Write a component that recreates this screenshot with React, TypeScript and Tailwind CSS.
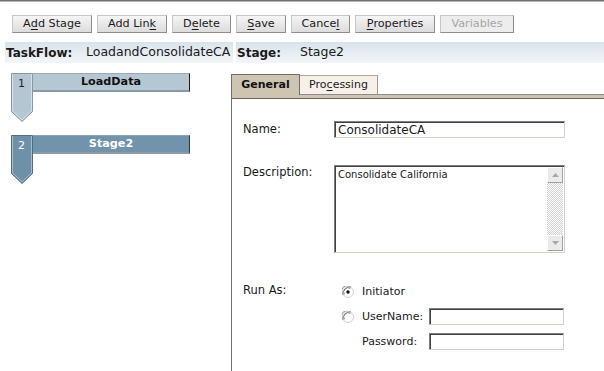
import React from "react";

function Btn({ w, children, disabled }: { w: string; children: React.ReactNode; disabled?: boolean }) {
  return (
    <div
      className={`${w} h-[18px] flex items-center justify-center border border-[#c6c6c6] border-r-[#8e8e8e] border-b-[#8e8e8e] text-[11.2px] leading-none ${
        disabled ? "bg-[#ededed] text-[#a6a6a6]" : "bg-gradient-to-b from-[#f5f5f5] to-[#dcdcdc] text-[#1a1a1a]"
      }`}
    >
      {children}
    </div>
  );
}

function U({ children }: { children: React.ReactNode }) {
  return <span className="underline underline-offset-[2px]">{children}</span>;
}

function StageMarker({ n, name, active }: { n: string; name: string; active?: boolean }) {
  const fill = active ? "#6f90a9" : "#b4c6d1";
  const stroke = active ? "#4e6b82" : "#8697a5";
  const hi = active ? "#a6bccc" : "#d6e0e7";
  return (
    <div className="flex items-start h-[49px]">
      <div className="relative w-[22px] h-[49px]">
        <svg className="absolute inset-0" width="22" height="49" viewBox="0 0 22 49">
          <polygon points="0.5,0.5 21.5,0.5 21.5,38.5 11,48.5 0.5,38.5" fill={fill} stroke={stroke} />
          <polyline points="1.5,1 1.5,38 11,46.8" fill="none" stroke={hi} />
          <polyline points="20.5,1 20.5,38 11,46.8" fill="none" stroke={hi} />
        </svg>
        <span
          className={`absolute left-0 top-[4px] w-[21px] text-center text-[11px] leading-[13px] ${
            active ? "text-white" : "text-[#1c1c2c]"
          }`}
        >
          {n}
        </span>
      </div>
      <div
        className={`w-[157px] h-[19px] flex items-center justify-center pt-[1px] border-t border-b-2 border-r text-[11.2px] font-bold ${
          active
            ? "bg-[#7193ab] border-t-[#8fa3b2] border-b-[#8c9aa6] border-r-[#2c3a44] text-white"
            : "bg-[#b5c7d2] border-t-[#9aabb7] border-b-[#8a9ba8] border-r-[#1a1a1a] text-[#111]"
        }`}
      >
        {name}
      </div>
    </div>
  );
}

function Radio({ checked }: { checked?: boolean }) {
  return (
    <svg width="12" height="12" viewBox="0 0 12 12" className="shrink-0">
      <circle cx="6" cy="6" r="5.5" fill="#fff" stroke="#d4d0c8" />
      <path d="M1.2 9 A5.5 5.5 0 0 1 9 1.2" fill="none" stroke="#8a8a8a" />
      <path d="M2.2 8.3 A4.5 4.5 0 0 1 8.3 2.2" fill="none" stroke="#404040" strokeWidth="0.8" />
      {checked && <circle cx="6" cy="6" r="1.7" fill="#111" />}
    </svg>
  );
}

const inputCls =
  "border border-t-[#7f7f7f] border-l-[#7f7f7f] border-b-[#d4d0c8] border-r-[#d4d0c8] shadow-[inset_1px_1px_0_#404040] bg-white";

export default function App() {
  return (
    <div className="w-[604px] h-[371px] overflow-hidden bg-white font-['DejaVu_Sans',sans-serif] text-[#1a1a1a] flex flex-col">
      <div className="h-[1px] bg-[#6e6e6e] shrink-0" />
      <div className="h-[1px] bg-[#b4b4b4] shrink-0" />

      {/* toolbar */}
      <div className="flex gap-[5px] pl-[12px] pt-[13px] shrink-0">
        <Btn w="w-[80px]">
          A<U>d</U>d Stage
        </Btn>
        <Btn w="w-[70px]">
          Add Lin<U>k</U>
        </Btn>
        <Btn w="w-[59px]">
          D<U>e</U>lete
        </Btn>
        <Btn w="w-[50px]">
          <U>S</U>ave
        </Btn>
        <Btn w="w-[59px]">
          Cance<U>l</U>
        </Btn>
        <Btn w="w-[80px]">
          <U>P</U>roperties
        </Btn>
        <Btn w="w-[74px]" disabled>
          Variables
        </Btn>
      </div>

      {/* header */}
      <div className="flex gap-[3px] ml-[5px] mt-[9px] h-[21px] shrink-0">
        <div className="w-[228px] flex items-center pl-[1px] bg-gradient-to-b from-[#d9e3eb] to-[#f3f6f8]">
          <span className="text-[12px] font-bold w-[80px]">TaskFlow:</span>
          <span className="text-[12.5px]">LoadandConsolidateCA</span>
        </div>
        <div className="flex-1 flex items-center pl-[1px] bg-gradient-to-b from-[#d9e3eb] to-[#f3f6f8]">
          <span className="text-[12px] font-bold w-[63px]">Stage:</span>
          <span className="text-[12.5px]">Stage2</span>
        </div>
      </div>

      {/* main */}
      <div className="flex flex-1 min-h-0">
        {/* left stage list */}
        <div className="w-[231px] shrink-0 pl-[11px] pt-[10px] flex flex-col gap-[13px]">
          <StageMarker n="1" name="LoadData" />
          <StageMarker n="2" name="Stage2" active />
        </div>

        {/* right panel */}
        <div className="flex-1 flex flex-col pt-[11px]">
          <div className="flex h-[21px] shrink-0">
            <div className="w-[69px] h-[21px] bg-[#cdc5b1] border-t border-l border-r border-[#6f6f6f] flex items-center justify-center text-[11px] font-bold text-[#111]">
              General
            </div>
            <div className="w-[78px] h-[20px] mt-[1px] bg-[#f6f0e9] border-t border-r border-b border-t-[#b0a89e] border-r-[#a39b91] border-b-[#8c8c8c] flex items-center justify-center text-[11px]">
              Pro<U>c</U>essing
            </div>
            <div className="flex-1 border-b border-[#8c8c8c]" />
          </div>
          <div className="h-[4px] bg-[#cdc5b1] border-b border-l border-b-[#666] border-l-[#6f6f6f] shrink-0" />

          <div className="flex-1 border-l border-[#6f6f6f] pl-[11px] pt-[22px] text-[11.5px]">
            {/* Name */}
            <div className="flex items-center">
              <div className="w-[91px]">Name:</div>
              <div className={`w-[231px] h-[17px] ${inputCls} flex items-center pl-[3px] text-[12px] leading-none`}>
                ConsolidateCA
              </div>
            </div>

            {/* Description */}
            <div className="flex items-start mt-[27px]">
              <div className="w-[91px] leading-[14px]">Description:</div>
              <div className={`w-[231px] h-[88px] ${inputCls} flex`}>
                <div className="flex-1 pl-[3px] pt-[3px] text-[10px] leading-[12px]">Consolidate California</div>
                <div className="w-[16px] flex flex-col mr-[1px] mt-[1px] mb-[1px] bg-[repeating-conic-gradient(#cfcfcf_0_25%,#ffffff_0_50%)] bg-[length:2px_2px]">
                  <div className="h-[16px] bg-[#ebebeb] border border-[#fff] border-r-[#a0a0a0] border-b-[#a0a0a0] flex items-center justify-center">
                    <svg width="7" height="4" viewBox="0 0 7 4">
                      <polygon points="3.5,0 7,4 0,4" fill="#a8a8a8" />
                    </svg>
                  </div>
                  <div className="flex-1" />
                  <div className="h-[16px] bg-[#ebebeb] border border-[#fff] border-r-[#a0a0a0] border-b-[#a0a0a0] flex items-center justify-center">
                    <svg width="7" height="4" viewBox="0 0 7 4">
                      <polygon points="0,0 7,0 3.5,4" fill="#a8a8a8" />
                    </svg>
                  </div>
                </div>
              </div>
            </div>

            {/* Run As */}
            <div className="flex items-start mt-[30px]">
              <div className="w-[91px] leading-[14px]">Run As:</div>
              <div className="flex flex-col gap-[8px] pl-[8px] pt-[1px] text-[11px]">
                <div className="flex items-center h-[16px]">
                  <Radio checked />
                  <span className="ml-[8px]">Initiator</span>
                </div>
                <div className="flex items-center h-[17px]">
                  <Radio />
                  <span className="ml-[8px] w-[67px]">UserName:</span>
                  <div className={`w-[135px] h-[17px] ${inputCls}`} />
                </div>
                <div className="flex items-center h-[17px]">
                  <span className="ml-[20px] w-[67px]">Password:</span>
                  <div className={`w-[135px] h-[17px] ${inputCls}`} />
                </div>
              </div>
            </div>
          </div>
        </div>
      </div>
    </div>
  );
}
